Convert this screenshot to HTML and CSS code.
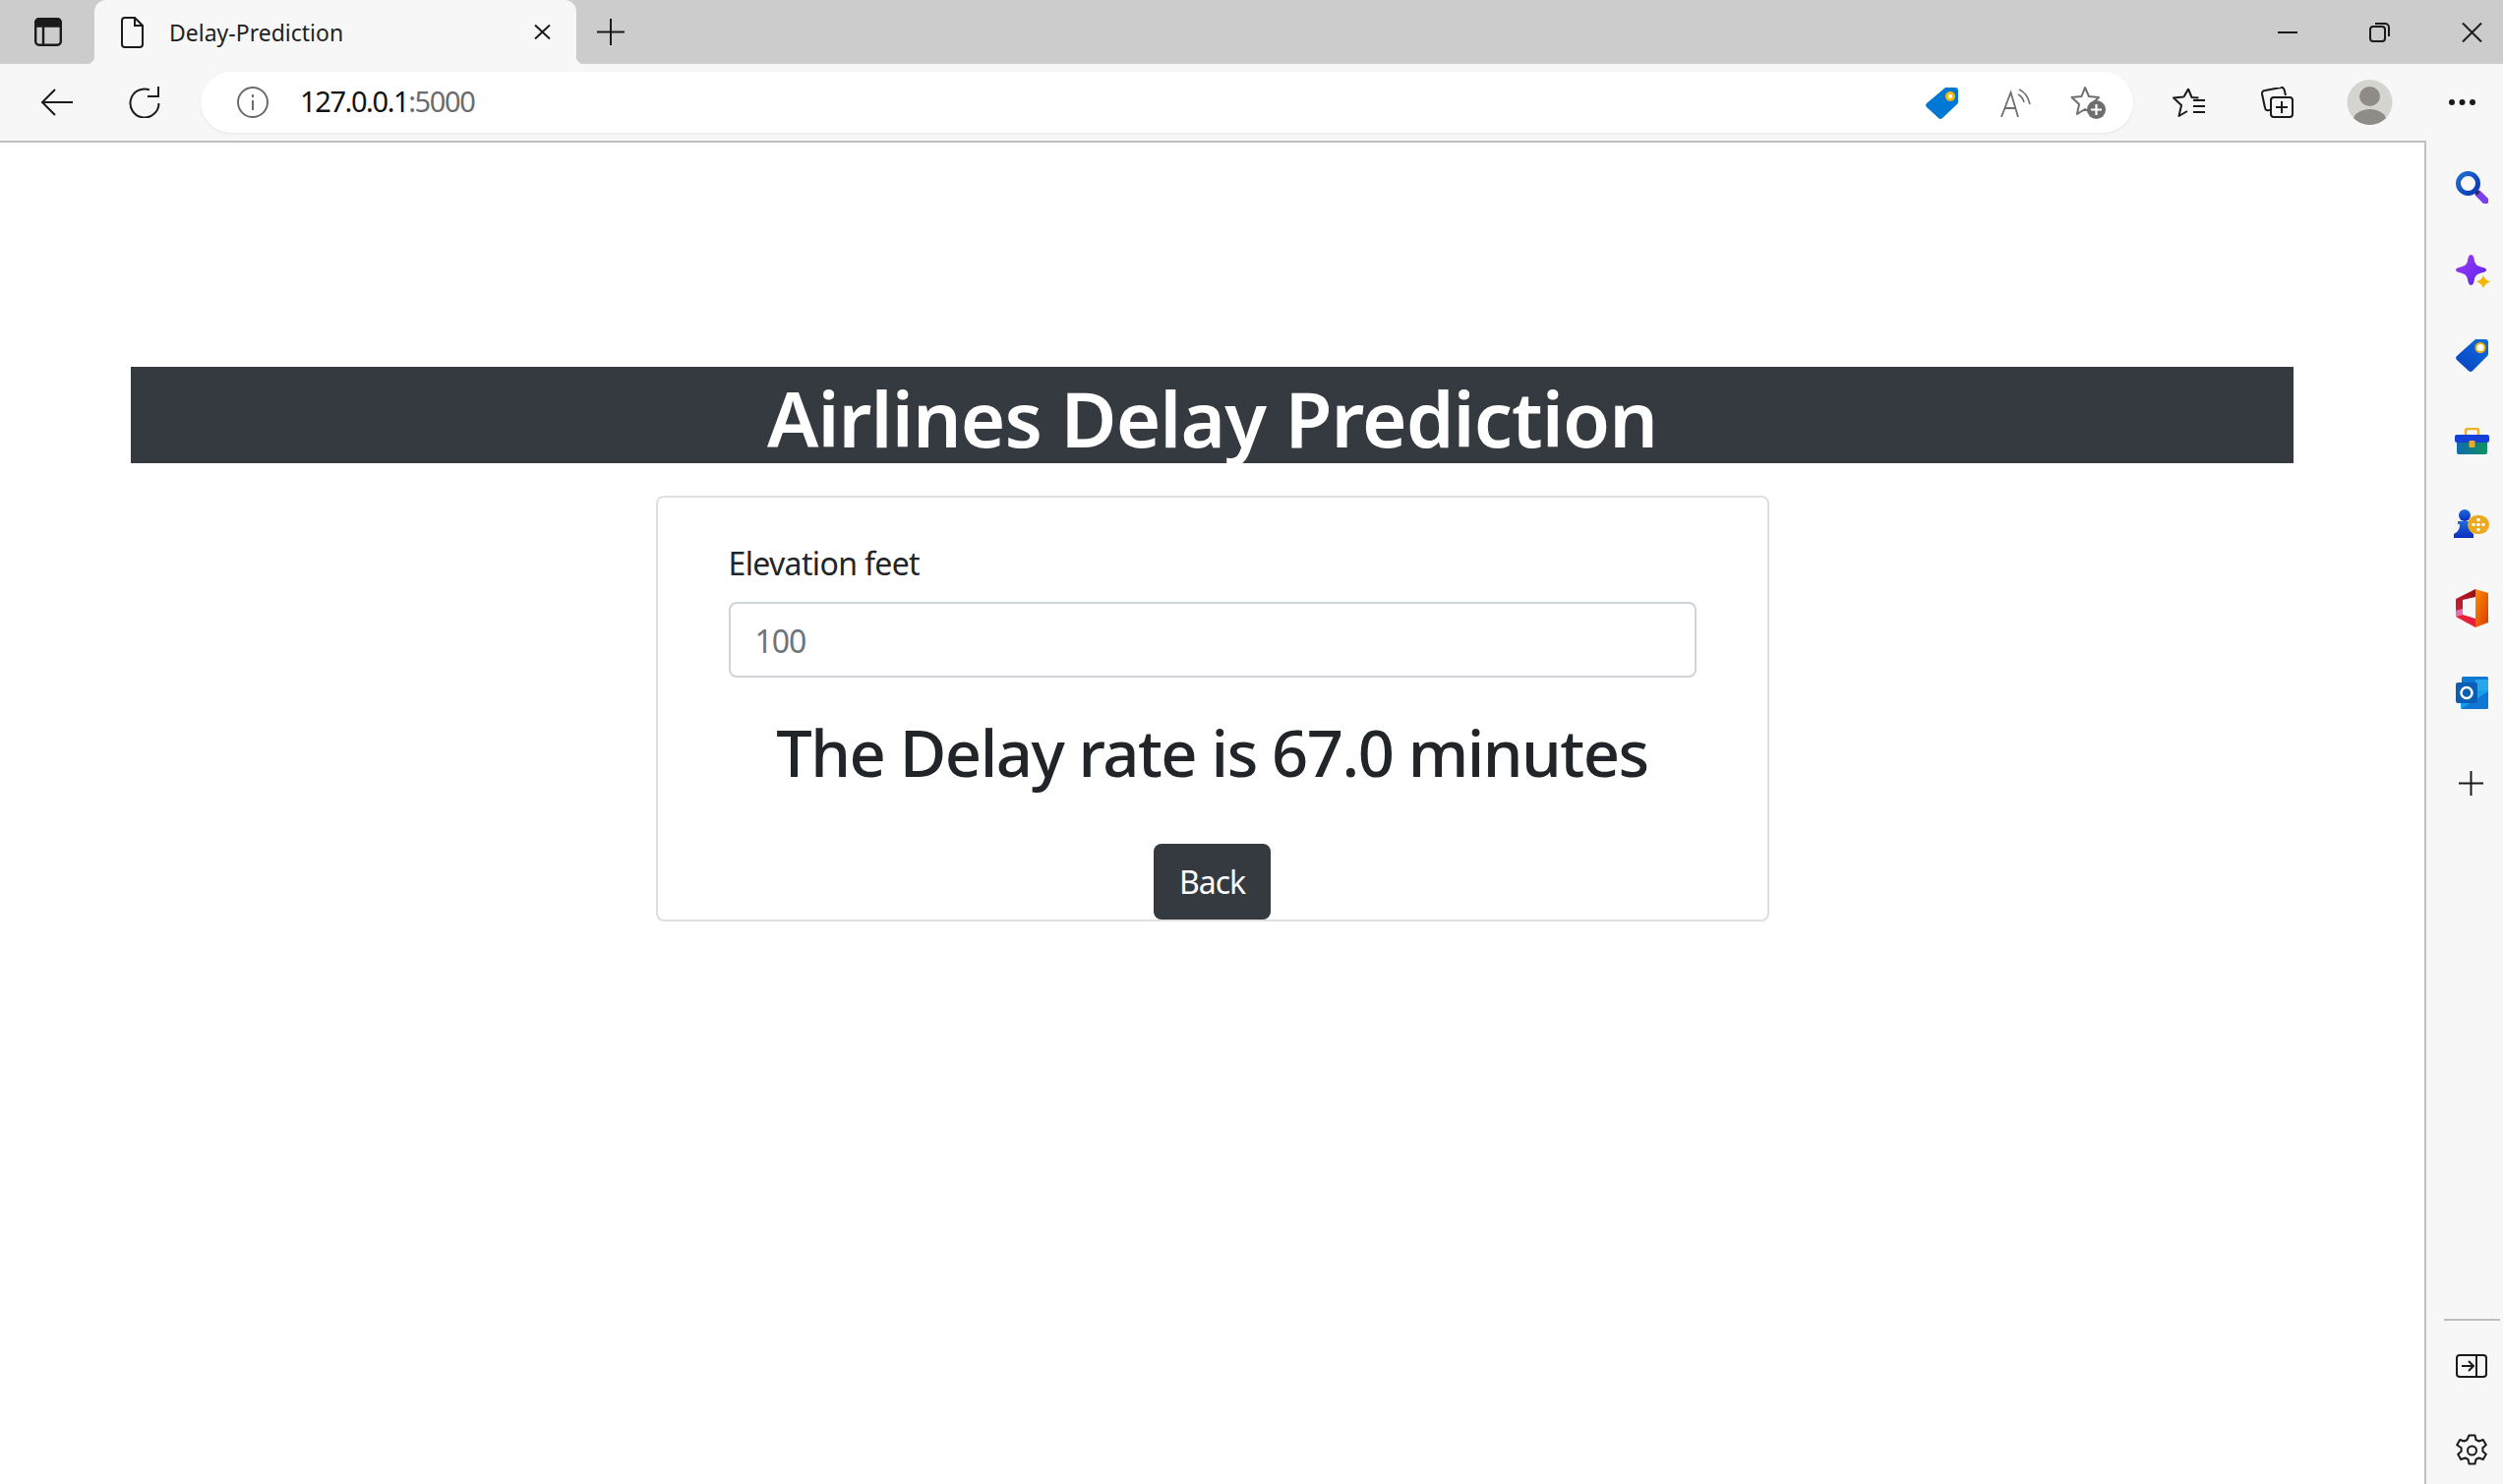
FILE: index.html
```html
<!DOCTYPE html>
<html lang="en">
<head>
    <meta charset="UTF-8">
    <title>Delay-Prediction</title>
    <link rel="stylesheet" href="styles.css">
</head>
<body>
    <!-- tab strip -->
    <div class="tabstrip">
        <svg class="ic-tabs" width="28" height="29" viewBox="0 0 28 29" fill="none" stroke="#1a1a1a" stroke-width="2.4"><rect x="1.2" y="1.2" width="25.6" height="26.6" rx="3.5"/><path d="M1.5 4.5a3 3 0 0 1 3-3h19a3 3 0 0 1 3 3v4h-25z" fill="#1a1a1a"/><path d="M9 8v19"/></svg>
        <div class="tab">
            <svg class="ic-doc" width="23" height="32" viewBox="0 0 23 32" fill="none" stroke="#1a1a1a" stroke-width="2"><path d="M4 1h10l8 8v19a3 3 0 0 1-3 3H4a3 3 0 0 1-3-3V4a3 3 0 0 1 3-3z"/><path d="M14 1v8h8"/></svg>
            <span class="tab-title">Delay-Prediction</span>
            <svg class="ic-tabclose" width="17" height="15" viewBox="0 0 17 15" stroke="#1a1a1a" stroke-width="2"><path d="M1 0.5 16 14.5M16 0.5 1 14.5"/></svg>
        </div>
        <svg class="ic-newtab" width="28" height="27" viewBox="0 0 28 27" stroke="#1a1a1a" stroke-width="2"><path d="M0 13.5h28M14 0v27"/></svg>
        <svg class="ic-min" width="20" height="2" viewBox="0 0 20 2"><path d="M0 1h20" stroke="#1a1a1a" stroke-width="2"/></svg>
        <svg class="ic-restore" width="21" height="20" viewBox="0 0 21 20" fill="none" stroke="#1a1a1a" stroke-width="2"><rect x="1" y="4" width="15" height="15" rx="3"/><path d="M6 1h10a4 4 0 0 1 4 4v9"/></svg>
        <svg class="ic-winclose" width="21" height="20" viewBox="0 0 21 20" stroke="#1a1a1a" stroke-width="2"><path d="M1 0.5 20 19.5M20 0.5 1 19.5"/></svg>
    </div>

    <!-- address bar row -->
    <div class="toolbar">
        <div class="toolbar-row">
            <svg class="ic-back" width="33" height="28" viewBox="0 0 33 28" fill="none" stroke="#1a1a1a" stroke-width="2"><path d="M33 14H2M15 1 2 14l13 13"/></svg>
            <svg class="ic-reload" width="32" height="32" viewBox="0 0 32 32" fill="none" stroke="#1a1a1a" stroke-width="2"><path d="M21 3.400A14.500 14.500 0 1 0 30.500 17"/><path d="M30 0v10H19"/></svg>
            <div class="address">
                <svg width="32" height="32" viewBox="0 0 32 32" fill="none" stroke="#6b6b6b" stroke-width="2"><circle cx="16" cy="16" r="15"/><path d="M16 14v10M16 8v3"/></svg>
                <span class="url">127.0.0.1<span class="url-port">:5000</span></span>
                <svg class="ic-price" width="33" height="33" viewBox="0 0 33 33"><path d="M20 1h10a3 3 0 0 1 3 3v11a4 4 0 0 1-1 3L17 32a3 3 0 0 1-4 0L1 21a3 3 0 0 1 0-4z" fill="#0078d4"/><circle cx="25" cy="10" r="5" fill="#ffb900"/><circle cx="25" cy="10" r="2.2" fill="#fff"/></svg>
                <svg class="ic-read" width="31" height="29" viewBox="0 0 31 29" fill="none" stroke="#6e6e6e" stroke-width="1.8"><path d="M1 29 10.500 4 18 29M4.500 20h11"/><path d="M18 6c3 1.500 5 4 6 8M19 1c5 2 9 7 11 15" stroke-width="1.6"/></svg>
                <svg class="ic-starplus" width="36" height="34" viewBox="0 0 36 34"><path d="M15 2 19 11l10 1-7.500 7 2 10-8.500-5-8 5 2-10L1.500 12l10-1z" fill="none" stroke="#6e6e6e" stroke-width="2" stroke-linejoin="round"/><circle cx="26.500" cy="24.500" r="9.500" fill="#6e6e6e"/><path d="M26.500 19v11M21 24.500h11" stroke="#fff" stroke-width="2.200"/></svg>
            </div>
            <svg class="ic-favs" width="33" height="30" viewBox="0 0 33 30" fill="none" stroke="#1a1a1a" stroke-width="2" stroke-linejoin="round"><path d="M16 1.500 19.500 10l7 .5M11.500 9.500 1 10.500l8 7.500-2.500 11 8.500-5M11.500 9.500 16 1.500"/><path d="M21 13h12M21 19h12M21 25h12"/></svg>
            <svg class="ic-coll" width="33" height="32" viewBox="0 0 33 32" fill="none" stroke="#1a1a1a" stroke-width="2"><path d="M25 9 23.500 3a3 3 0 0 0-3.500-2L4 4a3 3 0 0 0-3 3.500l3 14a3 3 0 0 0 5 2"/><rect x="10" y="11" width="22" height="20" rx="3"/><path d="M21 15v12M15 21h12"/></svg>
            <svg class="ic-avatar" width="47" height="46" viewBox="0 0 47 46"><defs><clipPath id="avatar-clip"><circle cx="23.500" cy="23" r="23"/></clipPath></defs><circle cx="23.500" cy="23" r="23" fill="#d4d4d1"/><g clip-path="url(#avatar-clip)" fill="#8f8b87"><ellipse cx="23.500" cy="17" rx="10.500" ry="10"/><ellipse cx="23.500" cy="42" rx="17" ry="12"/></g></svg>
            <svg class="ic-more" width="27" height="6" viewBox="0 0 27 6" fill="#1a1a1a"><circle cx="3" cy="3" r="3"/><circle cx="13.500" cy="3" r="3"/><circle cx="24" cy="3" r="3"/></svg>
        </div>
        <div class="toolbar-line"></div>
    </div>

    <div class="viewport">
        <main class="page">
            <h1 class="banner">Airlines Delay Prediction</h1>
            <div class="card">
                <label class="field-label" for="elevation">Elevation feet</label>
                <input class="field-input" id="elevation" type="text" placeholder="100">
                <h2 class="result">The Delay rate is 67.0 minutes</h2>
                <div class="actions"><button class="btn-back">Back</button></div>
            </div>
        </main>

        <!-- edge sidebar -->
        <aside class="sidebar">
            <svg class="side-search" width="33" height="33" viewBox="0 0 33 33" fill="none"><defs><linearGradient id="g-search" x1="0" y1="0" x2="1" y2="1"><stop offset="0" stop-color="#1f6fd6"/><stop offset="1" stop-color="#0a36b0"/></linearGradient></defs><path d="M23 23 30 30" stroke="#7a3ff0" stroke-width="7" stroke-linecap="round"/><path d="M20 20l3 3" stroke="#2b2b48" stroke-width="4"/><circle cx="12.500" cy="12.500" r="10" stroke="url(#g-search)" stroke-width="5"/></svg>
            <svg class="side-spark" width="35" height="35" viewBox="0 0 35 35"><defs><linearGradient id="g-spark" x1="0" y1="0" x2="1" y2="1"><stop offset="0" stop-color="#a03df5"/><stop offset="1" stop-color="#5a22ee"/></linearGradient></defs><path d="M15.500 0c2 0 3 3 3.500 6 .8 4 2.500 5.500 9 7 2 .5 3 1.500 3 2.500s-1 2-3 2.500c-6.500 1.500-8.200 3-9 7-.5 3-1.500 6-3.500 6s-3-3-3.500-6c-.8-4-2.500-5.500-9-7-2-.5-3-1.500-3-2.500s1-2 3-2.500c6.500-1.500 8.200-3 9-7 .5-3 1.500-6 3.500-6z" fill="url(#g-spark)"/><path d="M28 20c.8 4 2 5.500 7 7.500-5 2-6.200 3.500-7 7.500-.8-4-2-5.500-7-7.500 5-2 6.200-3.500 7-7.500z" fill="#f5b400"/></svg>
            <svg class="side-tag" width="33" height="33" viewBox="0 0 33 33"><defs><linearGradient id="g-tag" x1="0" y1="1" x2="1" y2="0"><stop offset="0" stop-color="#0c3fc0"/><stop offset="1" stop-color="#0a6fe0"/></linearGradient></defs><path d="M20 0h10a3 3 0 0 1 3 3v11a4 4 0 0 1-1 3L17 32a3 3 0 0 1-4 0L1 21a3 3 0 0 1 0-4z" fill="url(#g-tag)"/><circle cx="25" cy="8.500" r="4.500" fill="#fff" stroke="#f5b400" stroke-width="2"/></svg>
            <svg class="side-tools" width="35" height="27" viewBox="0 0 35 27"><defs><linearGradient id="g-tools" x1="0" y1="0" x2="1" y2="0"><stop offset="0" stop-color="#0f6cb0"/><stop offset="1" stop-color="#109060"/></linearGradient></defs><path d="M11 8V3a2 2 0 0 1 2-2h9a2 2 0 0 1 2 2v5" fill="none" stroke="#eeb12a" stroke-width="2.500"/><rect x="2" y="11" width="31" height="16" rx="2" fill="url(#g-tools)"/><rect y="7" width="35" height="8" rx="2" fill="#1540d8"/><rect x="14.500" y="13" width="6" height="7" rx="1" fill="#f0a91c"/></svg>
            <svg class="side-games" width="36" height="29" viewBox="0 0 36 29"><defs><linearGradient id="g-pawn" x1="0" y1="0" x2="0" y2="1"><stop offset="0" stop-color="#1e6cd8"/><stop offset="1" stop-color="#0b2fc0"/></linearGradient></defs><circle cx="11" cy="6" r="6" fill="url(#g-pawn)"/><path d="M4 12h14v3h-3c0 4 1 6 3 8l2 2v4H0v-4l3-2c2-2 3-4 3-8H4z" fill="url(#g-pawn)"/><rect x="14" y="6" width="22" height="19" rx="9.500" fill="#eda81c"/><g fill="#fff"><circle cx="25" cy="15.500" r="1.800"/><circle cx="25" cy="10.500" r="1.800"/><circle cx="25" cy="20.500" r="1.800"/><circle cx="20" cy="15.500" r="1.800"/><circle cx="30" cy="15.500" r="1.800"/></g></svg>
            <svg class="side-office" width="33" height="39" viewBox="0 0 33 39"><defs><linearGradient id="g-off1" x1="0" y1="0" x2="1" y2="1"><stop offset="0" stop-color="#ff8c00"/><stop offset="1" stop-color="#d83b01"/></linearGradient><linearGradient id="g-off2" x1="1" y1="0" x2="0" y2="1"><stop offset="0" stop-color="#8e1010"/><stop offset="1" stop-color="#d9233a"/></linearGradient></defs><path d="M20 0 33 4v30l-13 5z" fill="url(#g-off1)"/><path d="M20 0 0 10v18l7-2V11l13-3z" fill="url(#g-off2)"/><path d="M0 28l7-2 13 4v9z" fill="#e81f3a"/><path d="M0 22v6l7-2v-6z" fill="#e56fb5"/></svg>
            <svg class="side-outlook" width="33" height="33" viewBox="0 0 33 33"><rect x="6" width="27" height="14" rx="1.500" fill="#0f78d4"/><rect x="20" y="3" width="13" height="12" fill="#28a8ea"/><path d="M5 14 33 14V31a2 2 0 0 1-2 2H7a2 2 0 0 1-2-2z" fill="#14a0ea"/><path d="M5 33 33 15V31a2 2 0 0 1-2 2z" fill="#0f78d4"/><rect y="6" width="22" height="21" rx="2" fill="#0a5fb4"/><circle cx="11" cy="16.500" r="5.500" fill="none" stroke="#fff" stroke-width="2.500"/></svg>
            <svg class="side-add" width="25" height="25" viewBox="0 0 25 25" stroke="#1a1a1a" stroke-width="2"><path d="M0 12.500h25M12.500 0v25"/></svg>
            <div class="side-divider"></div>
            <svg class="side-panel" width="32" height="24" viewBox="0 0 32 24" fill="none" stroke="#1a1a1a" stroke-width="2"><rect x="1" y="1" width="30" height="22" rx="3"/><path d="M21 1v22M6 12h12M13 7l5 5-5 5"/></svg>
            <svg class="side-gear" width="33" height="34" viewBox="0 0 33 34" fill="none" stroke="#1a1a1a" stroke-width="2" stroke-linejoin="round"><path d="M13.500 1.500h6l1 4.500 3 1.500 4.300-1.500 3 5.200-3.400 3.100v3.400l3.400 3.100-3 5.200-4.300-1.500-3 1.500-1 4.500h-6l-1-4.500-3-1.500-4.300 1.500-3-5.200 3.400-3.100v-3.400L1.200 11.200l3-5.200 4.300 1.500 3-1.500z"/><circle cx="16.500" cy="17" r="4.500"/></svg>
        </aside>
    </div>
</body>
</html>
```

FILE: styles.css
```css
* {
    box-sizing: border-box;
}

body {
    margin: 0;
    width: 2545px;
    height: 1509px;
    overflow: hidden;
    display: flex;
    flex-direction: column;
    background-color: #fff;
    font-family: "Noto Sans", "Open Sans", sans-serif;
    color: #212529;
}

svg {
    display: block;
    flex: none;
}

/* tab strip */
.tabstrip {
    height: 65px;
    flex: none;
    display: flex;
    align-items: center;
    padding-left: 35px;
    background-color: #ccc;
}

.tab {
    position: relative;
    width: 490px;
    height: 65px;
    margin-left: 33px;
    padding-left: 27px;
    display: flex;
    align-items: center;
    background-color: #f7f7f7;
    border-radius: 12px 12px 0 0;
}

.tab::before,
.tab::after {
    content: "";
    position: absolute;
    bottom: 0;
    width: 8px;
    height: 8px;
}

.tab::before {
    left: -8px;
    background: radial-gradient(circle at 0 0, #ccc 8px, #f7f7f7 8.5px);
}

.tab::after {
    right: -8px;
    background: radial-gradient(circle at 100% 0, #ccc 8px, #f7f7f7 8.5px);
}

.tab-title {
    margin-left: 26px;
    width: 371px;
    font-size: 23px;
    color: #1f1f1f;
}

.ic-newtab { margin-left: 21px; }
.ic-min { margin-left: auto; }
.ic-restore { margin-left: 73px; }
.ic-winclose { margin-left: 73px; margin-right: 21px; }

/* toolbar */
.toolbar {
    flex: none;
    background-color: #f7f7f7;
}

.toolbar-row {
    height: 78px;
    display: flex;
    align-items: center;
    padding-left: 41px;
}

.toolbar-line {
    height: 2px;
    margin-right: 78px;
    background-color: #c0c0c0;
}

.ic-reload { margin-left: 57px; }

.address {
    width: 1965px;
    height: 62px;
    margin-left: 41px;
    padding: 0 28px 0 37px;
    display: flex;
    align-items: center;
    background-color: #fff;
    border-radius: 31px;
    box-shadow: 0 1px 3px rgba(0, 0, 0, 0.08);
}

.url {
    margin-left: 32px;
    padding-bottom: 3px;
    font-size: 29px;
    letter-spacing: -1.4px;
    color: #111;
}

.url-port {
    color: #6b6b6b;
}

.ic-price { margin-left: auto; }
.ic-read { margin-left: 43px; }
.ic-starplus { margin-left: 40px; }
.ic-favs { margin-left: 40px; }
.ic-coll { margin-left: 57px; }
.ic-avatar { margin-left: 54px; }
.ic-more { margin-left: 57px; }

/* page content */
.viewport {
    flex: 1;
    display: flex;
    min-height: 0;
}

.page {
    flex: 1;
    padding: 228px 133px 0;
}

.banner {
    height: 98px;
    margin: 0;
    padding-top: 3px;
    background-color: #343a40;
    color: #fff;
    font-size: 78px;
    font-weight: 600;
    line-height: 98px;
    letter-spacing: -0.9px;
    text-align: center;
}

.card {
    width: 1132px;
    height: 433px;
    margin: 33px auto 0;
    padding: 47px 72px 0;
    border: 2px solid #dfdfdf;
    border-radius: 8px;
}

.field-label {
    display: block;
    font-size: 32px;
    line-height: 39px;
    letter-spacing: -0.65px;
    color: #212529;
}

.field-input {
    display: block;
    width: 100%;
    height: 77px;
    margin-top: 20px;
    padding: 2px 25px 0;
    border: 2px solid #ced4da;
    border-radius: 8px;
    font-family: inherit;
    font-size: 32px;
    letter-spacing: -1px;
}

.field-input::placeholder {
    color: #6c757d;
    opacity: 1;
}

.result {
    margin: 37px 0 0;
    font-size: 65px;
    font-weight: 500;
    line-height: 78px;
    letter-spacing: -1.5px;
    text-align: center;
}

.actions {
    margin-top: 54px;
    display: flex;
    justify-content: center;
}

.btn-back {
    width: 119px;
    height: 77px;
    padding: 0;
    border: none;
    border-radius: 8px;
    background-color: #343a40;
    color: #fff;
    font-family: inherit;
    font-size: 32px;
    letter-spacing: -1px;
}

/* sidebar */
.sidebar {
    width: 80px;
    flex: none;
    display: flex;
    flex-direction: column;
    align-items: flex-start;
    padding: 0 0 17px 30px;
    border-left: 2px solid #c0c0c0;
    background-color: #f7f7f7;
}

.side-search { margin-top: 29px; }
.side-spark { margin-top: 52px; }
.side-tag { margin-top: 51px; }
.side-tools { margin-top: 57px; margin-left: -1px; }
.side-games { margin-top: 56px; margin-left: -2px; }
.side-office { margin-top: 52px; }
.side-outlook { margin-top: 50px; }
.side-add { margin-top: 63px; margin-left: 3px; }

.side-divider {
    width: 57px;
    height: 2px;
    margin: auto 0 0 -12px;
    background-color: #bdbdbd;
}

.side-panel { margin-top: 34px; }
.side-gear { margin-top: 57px; }
```
